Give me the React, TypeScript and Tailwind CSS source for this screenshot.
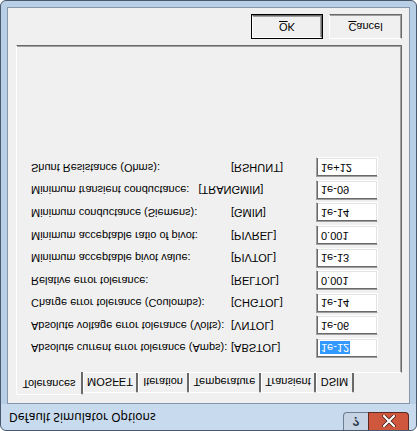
import React from "react";

type Row = { label: string; key: string; value: string; selected?: boolean; inline?: boolean };

const rows: Row[] = [
  { label: "Absolute current error tolerance (Amps):", key: "[ABSTOL]", value: "1e-12", selected: true },
  { label: "Absolute voltage error tolerance (Volts):", key: "[VNTOL]", value: "1e-06" },
  { label: "Charge error tolerance (Coulombs):", key: "[CHGTOL]", value: "1e-14" },
  { label: "Relative error tolerance:", key: "[RELTOL]", value: "0.001" },
  { label: "Minimum acceptable pivot value:", key: "[PIVTOL]", value: "1e-13" },
  { label: "Minimum acceptable ratio of pivot:", key: "[PIVREL]", value: "0.001" },
  { label: "Minimum conductance (Siemens):", key: "[GMIN]", value: "1e-14" },
  { label: "Minimum transient conductance:", key: "[TRANGMIN]", value: "1e-09", inline: true },
  { label: "Shunt Resistance (Ohms):", key: "[RSHUNT]", value: "1e+12" },
];

const tabs = [
  { name: "Tolerances", w: "w-[67px]" },
  { name: "MOSFET", w: "w-[55px]" },
  { name: "Iteration", w: "w-[51px]" },
  { name: "Temperature", w: "w-[72px]" },
  { name: "Transient", w: "w-[55px]" },
  { name: "DSIM", w: "w-[38px]" },
];

export default function App() {
  return (
    <div className="w-[417px] h-[431px] bg-white [transform:scaleY(-1)]">
      <div
        className="w-[417px] h-[431px] flex flex-col rounded-[6px] border border-[#4a5a6c] bg-[#b9cfe5] text-black"
        style={{ fontFamily: '"Liberation Sans", Arial, sans-serif' }}
      >
        {/* title bar */}
        <div className="h-[26px] flex items-start justify-between shrink-0 rounded-t-[6px] bg-[#c8dbee]">
          <div className="pl-[8px] pt-[6px] text-[12px] leading-[14px] text-black" style={{ fontFamily: '"Noto Sans", "Liberation Sans", sans-serif' }}>
            Default Simulator Options
          </div>
          <div className="flex mr-[7px] h-[18px]">
            <div className="w-[25px] h-[18px] rounded-bl-[4px] border border-t-0 border-r-0 border-[#6c7e92] bg-[#c6d3e2] flex items-center justify-center text-[12px] font-bold text-[#2b3a4c]">
              ?
            </div>
            <div className="w-[41px] h-[18px] rounded-br-[4px] border border-t-0 border-[#5a2a22] bg-[#cf573d] flex items-center justify-center">
              <svg width="14" height="12" viewBox="0 0 14 12">
                <path d="M2 1 L12 11 M12 1 L2 11" stroke="#3b1a14" strokeWidth="3.6" strokeLinecap="round" />
                <path d="M2 1 L12 11 M12 1 L2 11" stroke="#ffffff" strokeWidth="2.2" strokeLinecap="round" />
              </svg>
            </div>
          </div>
        </div>

        {/* client area */}
        <div className="mx-[6px] mb-[6px] flex-1 border border-[#8396ab] bg-[#f0f0f0] flex flex-col text-[11px] leading-[13px]">
          <div className="pl-[8px] pr-[7px] pt-[8px] flex flex-col">
            {/* tabs */}
            <div className="flex items-end h-[22px] relative z-10">
              {tabs.map((t, i) => {
                const sel = i === 0;
                return (
                  <div
                    key={t.name}
                    className={
                      sel
                        ? `${t.w} h-[23px] -mb-[1px] bg-[#f0f0f0] border-l border-t border-white border-r-2 border-r-[#696969] rounded-t-[2px] flex items-center justify-center`
                        : `${t.w} h-[20px] bg-[#f0f0f0] border-l border-t border-white border-r-2 border-r-[#696969] rounded-t-[2px] flex items-center justify-center`
                    }
                  >
                    <span className={sel ? "pb-[1px]" : "pt-[1px]"}>{t.name}</span>
                  </div>
                );
              })}
            </div>
            {/* panel */}
            <div className="h-[328px] border-l border-t border-white border-r border-b border-r-[#696969] border-b-[#696969] shadow-[inset_-1px_-1px_0_#a0a0a0] pt-[14px] pl-[14px] flex flex-col gap-[2.6px]">
              {rows.map((r) => (
                <div key={r.key} className="flex items-center h-[20px]">
                  {r.inline ? (
                    <div className="w-[285px] whitespace-nowrap">
                      {r.label}&nbsp;&nbsp;&nbsp;{r.key}
                    </div>
                  ) : (
                    <>
                      <div className="w-[200px] whitespace-nowrap">{r.label}</div>
                      <div className="w-[85px] whitespace-nowrap">{r.key}</div>
                    </>
                  )}
                  <div className="w-[62px] h-[20px] bg-white border border-t-[#a0a0a0] border-l-[#a0a0a0] border-r-white border-b-white shadow-[inset_1px_1px_0_#696969,inset_-1px_-1px_0_#e3e3e3] flex items-center pl-[3px]">
                    <span className={r.selected ? "bg-[#3399ff] text-white px-[1px]" : "px-[1px]"}>{r.value}</span>
                  </div>
                </div>
              ))}
            </div>
          </div>
          {/* buttons */}
          <div className="flex justify-end gap-[6px] pr-[7px] pt-[6px]">
            <div className="w-[72px] h-[25px] border border-black p-0">
              <div className="w-full h-full border border-t-white border-l-white border-r-[#696969] border-b-[#696969] shadow-[inset_-1px_-1px_0_#a0a0a0] flex items-center justify-center">
                <span><span className="underline">O</span>K</span>
              </div>
            </div>
            <div className="w-[73px] h-[25px] border border-t-white border-l-white border-r-[#696969] border-b-[#696969] shadow-[inset_-1px_-1px_0_#a0a0a0] flex items-center justify-center">
              <span><span className="underline">C</span>ancel</span>
            </div>
          </div>
        </div>
      </div>
    </div>
  );
}
